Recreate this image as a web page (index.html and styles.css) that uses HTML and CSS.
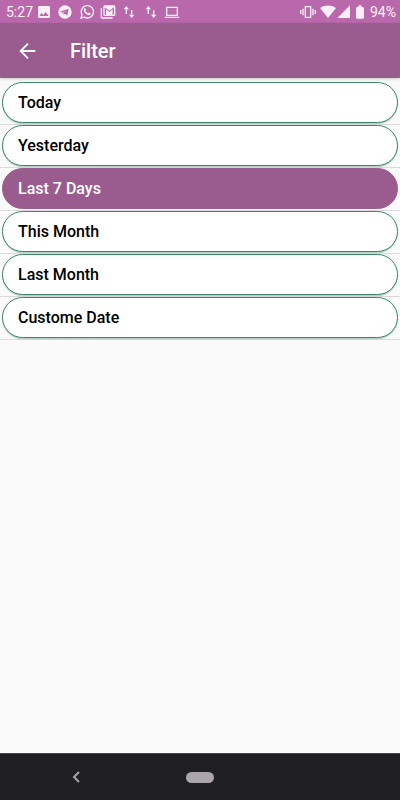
FILE: index.html
```html
<!DOCTYPE html>
<html lang="en">
<head>
    <meta charset="UTF-8">
    <meta name="viewport" content="width=device-width, initial-scale=1.0">
    <title>Filter</title>
    <link rel="stylesheet" href="styles.css">
</head>
<body>
    <div class="status-bar">
        <span class="time">5:27</span>
        <div class="notifications">
            <svg viewBox="0 0 24 24"><path d="M21 19V5a2 2 0 0 0-2-2H5a2 2 0 0 0-2 2v14a2 2 0 0 0 2 2h14a2 2 0 0 0 2-2zM8.500 13.500l2.500 3 3.500-4.500 4.500 6H5z"/></svg>
            <svg viewBox="0 0 24 24"><path fill-rule="evenodd" d="M12 2a10 10 0 1 0 0 20 10 10 0 0 0 0-20zm5.500 5L15.600 17.200l-3.600-2.600-2 2-.5-3.800L15 9l-7 4-3.500-1.200z"/></svg>
            <svg viewBox="0 0 24 24"><path class="line" d="M3 21l1.400-4.800A9.300 9.300 0 1 1 8 19.800z"/><path d="M8.200 6.500c.6-.5 1.300-.3 1.500.2l.8 1.900c.1.400-.7 1.200-.9 1.500.7 1.600 2.100 3 4 3.800l1.300-1.300 2.600 1.200c.3 2-1.300 3.100-2.800 2.900-3.700-.5-7.100-4-7.500-7.300-.1-1.200.3-2.300 1-2.900z"/></svg>
            <svg viewBox="0 0 24 24"><path d="M3 6H1v14a2 2 0 0 0 2 2h16v-2H3z"/><path fill-rule="evenodd" d="M7 2h14a2 2 0 0 1 2 2v12a2 2 0 0 1-2 2H7a2 2 0 0 1-2-2V4a2 2 0 0 1 2-2zm0 3v11h2V8l5 4 5-4v8h2V5l-7 5z"/></svg>
            <svg viewBox="0 0 24 24"><path d="M8 3L4 8h3v7h2V8h3zM15 9v7h-3l4 5 4-5h-3V9z"/></svg>
            <svg viewBox="0 0 24 24"><path d="M8 3L4 8h3v7h2V8h3zM15 9v7h-3l4 5 4-5h-3V9z"/></svg>
            <svg viewBox="0 0 24 24"><path class="line" d="M4 5h16v12H4zM1 20h22"/></svg>
        </div>
        <div class="system">
            <svg class="vibrate" viewBox="0 0 24 24"><path class="line" d="M8 4h8v16H8zM4.500 7v10M1 9v6M19.500 7v10M23 9v6"/></svg>
            <svg viewBox="0 0 24 24"><path d="M0 6C7 1 17 1 24 6L12 21z"/></svg>
            <svg viewBox="0 0 24 24"><path d="M2 21h19V2z"/></svg>
            <svg viewBox="0 0 24 24"><path d="M16 4h-2V2h-4v2H8L6 6v14l1 2h10l1-2V6z"/></svg>
            <span class="battery-level">94%</span>
        </div>
    </div>

    <header class="header">
        <button class="back" aria-label="Back">
            <svg viewBox="0 0 24 24"><path class="line" d="M20 12H4M12 4l-8 8 8 8"/></svg>
        </button>
        <h1>Filter</h1>
    </header>

    <main class="content">
        <ul class="filter-list">
            <li><button class="option">Today</button></li>
            <li><button class="option">Yesterday</button></li>
            <li><button class="option selected">Last 7 Days</button></li>
            <li><button class="option">This Month</button></li>
            <li><button class="option">Last Month</button></li>
            <li><button class="option">Custome Date</button></li>
        </ul>
    </main>

    <nav class="nav-bar">
        <button class="nav-back" aria-label="System back">
            <svg viewBox="0 0 16 16"><path class="line" d="M10 3L5 8l5 5"/></svg>
        </button>
        <button class="nav-home" aria-label="Home"></button>
    </nav>

    <script>
        const options = document.querySelectorAll('.option');

        options.forEach(option => {
            option.addEventListener('click', () => {
                options.forEach(o => o.classList.remove('selected'));
                option.classList.add('selected');
            });
        });
    </script>
</body>
</html>
```
FILE: styles.css
```css
* {
    box-sizing: border-box;
}

body {
    font-family: Roboto, sans-serif;
    background-color: #fafafa;
    margin: 0;
    min-height: 100vh;
    display: flex;
    flex-direction: column;
}

button {
    font-family: inherit;
    border: none;
    padding: 0;
    background: none;
    cursor: pointer;
}

svg {
    display: block;
    width: 16px;
    height: 16px;
    fill: currentColor;
}

.line {
    fill: none;
    stroke: currentColor;
    stroke-width: 2;
}

.status-bar {
    height: 23px;
    padding: 0 4px 0 6px;
    display: flex;
    align-items: center;
    background-color: #b969ab;
    color: #fbeef8;
    font-size: 14px;
}

.notifications {
    width: 150px;
    display: grid;
    grid-template-columns: repeat(7, 1fr);
    place-items: center;
}

.system {
    margin-left: auto;
    display: flex;
    align-items: center;
}

.system .vibrate {
    margin-right: 4px;
}

.battery-level {
    margin-left: 2px;
}

.header {
    height: 55px;
    padding: 0 16px;
    display: flex;
    align-items: center;
    gap: 30px;
    background-color: #9a5c8f;
    color: #ffffff;
    box-shadow: 0 1px 3px rgba(0, 0, 0, 0.2);
}

.header h1 {
    margin: 0;
    font-size: 20px;
    font-weight: 500;
}

.back svg {
    width: 24px;
    height: 22px;
    color: #ffffff;
}

.content {
    flex: 1;
    padding-top: 4px;
}

.filter-list {
    list-style: none;
    margin: 0;
    padding: 0;
}

.filter-list li {
    padding: 0 2px 1px;
    border-bottom: 1px solid #d9d9dc;
}

.option {
    display: block;
    width: 100%;
    height: 41px;
    padding: 0 15px;
    border: 1px solid #3c8667;
    border-radius: 21px;
    background-color: #ffffff;
    color: #000000;
    font-size: 16px;
    font-weight: 500;
    text-align: left;
    box-shadow: 0 1px 1px rgba(60, 134, 103, 0.4);
}

.option.selected {
    background-color: #9a5c8f;
    border-color: #9a5c8f;
    color: #ffffff;
    box-shadow: none;
}

.nav-bar {
    height: 47px;
    display: grid;
    grid-template-columns: repeat(5, 1fr);
    place-items: center;
    background-color: #1f1f24;
    border-top: 1px solid #47474a;
}

.nav-back {
    grid-column: 1 / 3;
    padding-right: 6px;
    color: #a5a3a6;
}

.nav-home {
    grid-column: 3;
    width: 28px;
    height: 11px;
    border-radius: 6px;
    background-color: #aaa6aa;
}
```
